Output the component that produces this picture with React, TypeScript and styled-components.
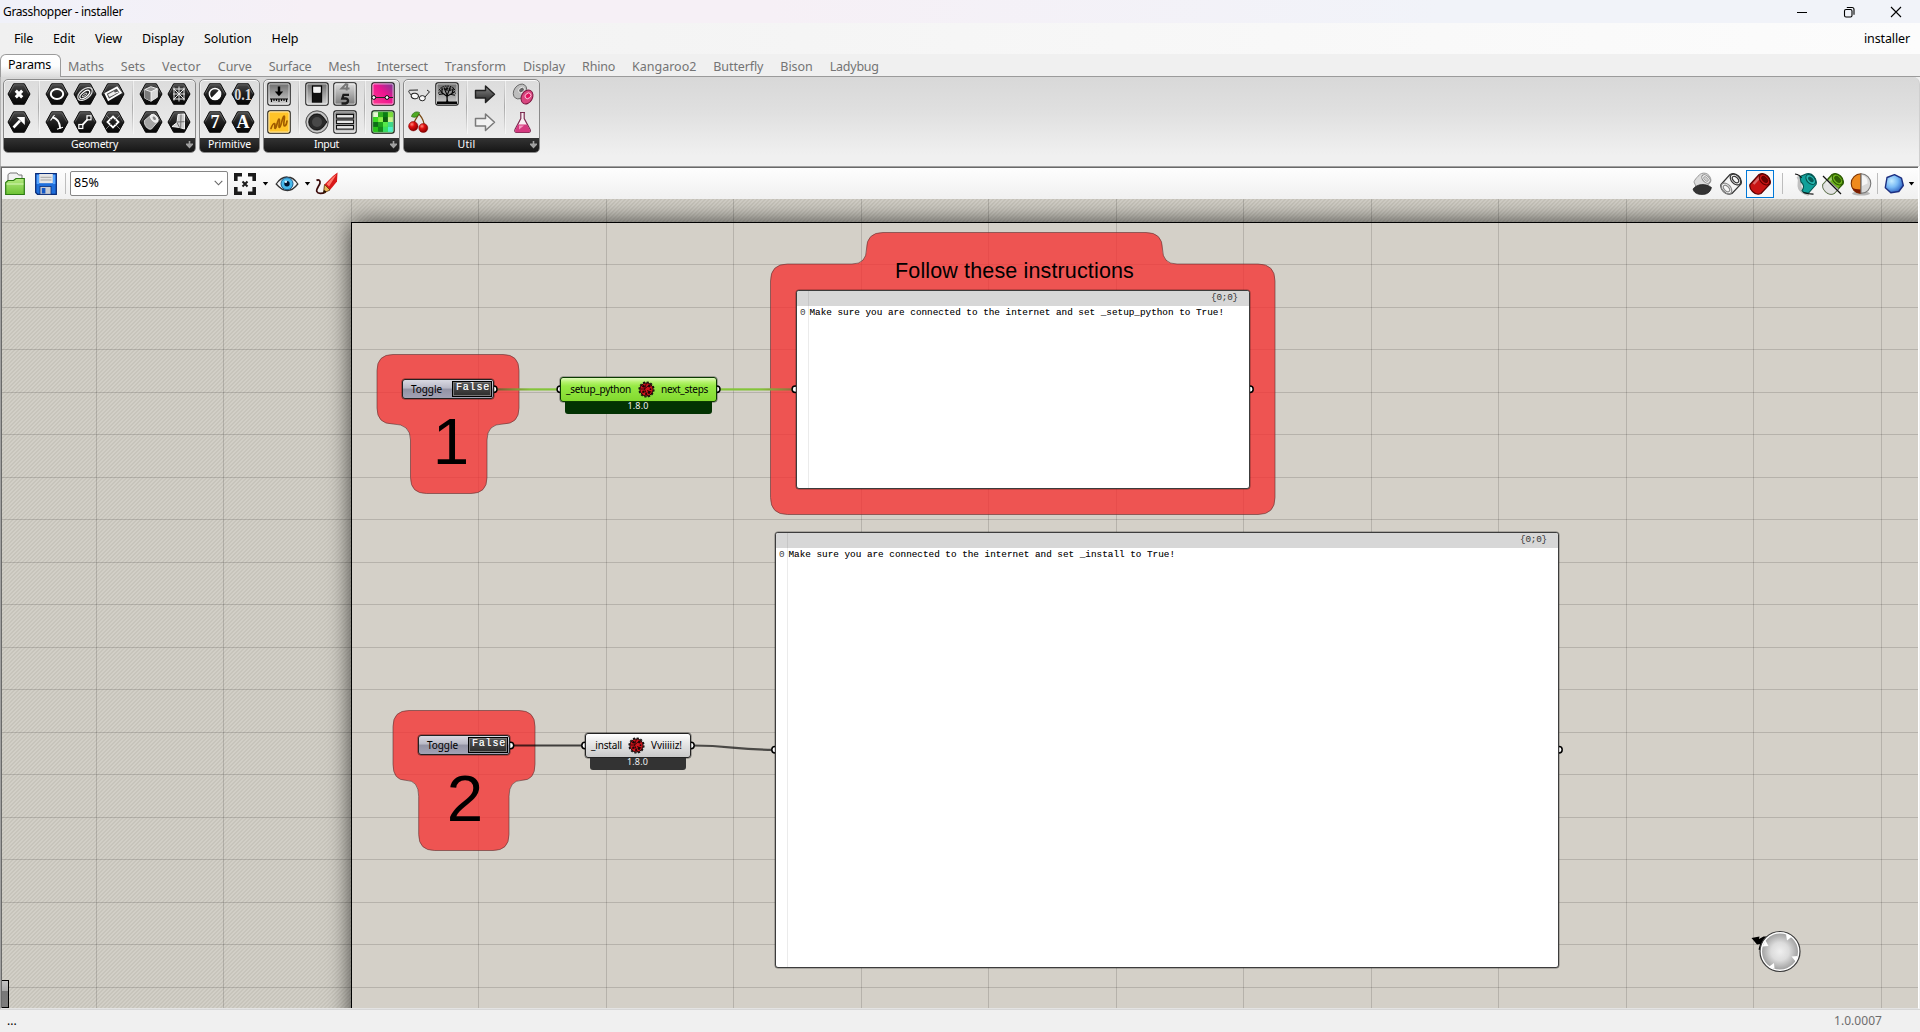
import React, { useLayoutEffect, useRef } from "react";
import styled, { createGlobalStyle } from "styled-components";

const ui = '"Noto Sans", "Open Sans", sans-serif';
const mono = '"Liberation Mono", monospace';

const Global = createGlobalStyle`
  * { box-sizing: border-box; }
  body { margin: 0; overflow: hidden; background: #f0f0f0; font-family: ${ui}; }
  svg { display: block; }
`;

/* ---------- text stretched to a known run width ---------- */

const Run = styled.span<{ $w: number }>`
  display: inline-block;
  width: ${(p) => p.$w}px;
  white-space: pre;
`;

function Fit({ w, children }: { w: number; children: string }) {
  const ref = useRef<HTMLSpanElement>(null);
  useLayoutEffect(() => {
    const el = ref.current;
    if (!el) return;
    el.style.letterSpacing = "0px";
    const natural = el.getBoundingClientRect().width;
    el.style.letterSpacing = `${(w - natural) / children.length}px`;
  }, [w, children]);
  return (
    <Run $w={w}>
      <span ref={ref}>{children}</span>
    </Run>
  );
}

/* ---------- window frame ---------- */

const Page = styled.div`
  width: 1920px;
  height: 1032px;
  display: flex;
  flex-direction: column;
  overflow: hidden;
  background: #f0f0f0;
  color: #000;
`;

const TitleBar = styled.header`
  height: 23px;
  flex: none;
  display: flex;
  align-items: center;
  padding: 0 18px 0 3px;
  background: linear-gradient(90deg, #f0f1f9 0%, #f6f0f6 16%, #f6f0f6 40%, #f1f3f9 75%);
  font-size: 12px;
  line-height: 23px;
`;

const WindowButtons = styled.div`
  margin-left: auto;
  display: flex;
  gap: 35px;
`;

const MenuBar = styled.nav`
  height: 31px;
  flex: none;
  display: flex;
  align-items: center;
  gap: 20px;
  padding: 0 10px 0 14px;
  background: linear-gradient(90deg, #f0f0f0 0%, #f6f6f6 50%, #fcfcfc 100%);
  font-size: 12.5px;
  line-height: 29px;
`;

const DocName = styled.span`
  margin-left: auto;
`;

const TabStrip = styled.div`
  height: 23px;
  flex: none;
  display: flex;
  align-items: flex-end;
  background: #f0f0f0;
`;

const ActiveTab = styled.div`
  width: 61px;
  height: 23px;
  flex: none;
  padding-left: 7px;
  border: 1px solid #9b9b9b;
  border-bottom: 0;
  border-radius: 6px 6px 0 0;
  background: linear-gradient(#ffffff 0%, #fdfdfd 50%, #dcdcdc 100%);
  font-size: 12.5px;
  line-height: 20px;
`;

const IdleTabs = styled.div`
  flex: 1;
  height: 23px;
  display: flex;
  gap: 17px;
  padding-left: 7px;
  border-bottom: 1px solid #9b9b9b;
  color: #747474;
  font-size: 12.5px;
  line-height: 25px;
`;

const Ribbon = styled.section`
  height: 89px;
  flex: none;
  display: flex;
  align-items: flex-start;
  gap: 3px;
  padding: 2px 0 0 2px;
  border-left: 1px solid #b4b4b4;
  border-right: 1px solid #cfcfcf;
  border-radius: 0 7px 0 0;
  background: linear-gradient(#d8d8d8 0%, #e0e0e0 40%, #f0f0f0 88%);
`;

const Group = styled.div`
  height: 74px;
  display: flex;
  flex-direction: column;
  border-radius: 5px;
  border: 1px solid #8a8a8a;
  box-shadow: inset 0 1px 0 #fafafa, inset 1px 0 0 #eee;
  background: linear-gradient(#dcdcdc, #f0f0f0);
  overflow: hidden;
`;

const GroupIcons = styled.div`
  flex: 1;
  display: flex;
  padding: 0 2px 0 1px;
`;

const IconColumn = styled.div`
  width: 28px;
  display: grid;
  grid-template-rows: 28px 28px;
  place-items: center;
`;

const GroupRule = styled.div`
  width: 10px;
  display: flex;
  justify-content: center;
  &::before {
    content: "";
    width: 1px;
    height: 54px;
    background: linear-gradient(rgba(150, 150, 150, 0), #aaa 50%, rgba(150, 150, 150, 0));
    box-shadow: 1px 0 0 rgba(255, 255, 255, 0.5);
  }
`;

const GroupLabel = styled.div<{ $more?: boolean }>`
  position: relative;
  height: 14px;
  display: flex;
  justify-content: center;
  padding-right: ${(p) => (p.$more ? 10 : 0)}px;
  background: linear-gradient(#333, #161616);
  color: #fff;
  font-size: 10.5px;
  line-height: 12px;
`;

const Expander = styled.svg`
  position: absolute;
  right: 2px;
  top: 3px;
`;

/* ---------- editor ---------- */

const Editor = styled.main`
  height: 843px;
  flex: none;
  margin-right: 1px;
  display: flex;
  flex-direction: column;
  border: 1px solid #a0a0a0;
  border-right-color: #fff;
  border-bottom-color: #e3e3e3;
`;

const EditorInner = styled.div`
  flex: 1;
  min-height: 0;
  display: flex;
  flex-direction: column;
  border-left: 1px solid #696969;
  border-top: 1px solid #696969;
`;

const Toolbar = styled.div`
  height: 31px;
  flex: none;
  display: flex;
  align-items: center;
  padding: 0 3px 0 3px;
  background: linear-gradient(#fefefe, #f0f0f0);
  & > svg { flex: none; }
`;

const Gap = styled.div<{ $w: number }>`
  width: ${(p) => p.$w}px;
  flex: none;
`;

const Push = styled.div`
  flex: 1;
`;

const ToolRule = styled.div`
  width: 1px;
  height: 21px;
  flex: none;
  background: #bdbdbd;
`;

const ZoomBox = styled.div`
  width: 158px;
  height: 25px;
  flex: none;
  display: flex;
  align-items: center;
  justify-content: space-between;
  padding: 0 4px 1px 3px;
  border: 1px solid #868686;
  border-radius: 2px;
  background: #fff;
  font-size: 12.5px;
  line-height: 20px;
`;

const Picked = styled.div`
  width: 28px;
  height: 28px;
  flex: none;
  display: grid;
  place-items: center;
  border: 1px solid #0078d7;
  background: #f7f9fb;
`;

const Canvas = styled.div`
  position: relative;
  flex: 1;
  overflow: hidden;
  background: #d4d0c8;
`;

const Plane = styled.div`
  position: absolute;
  left: -2px;
  top: -199px;
  width: 1920px;
  height: 1032px;
`;

const Layer = styled.svg`
  position: absolute;
  left: 0;
  top: 0;
`;

const Sheet = styled.div`
  position: absolute;
  left: 351px;
  top: 222px;
  width: 1700px;
  height: 900px;
  border: 1px solid #000;
  background: #d4d0c8;
  box-shadow: 0 0 22px rgba(0, 0, 0, 0.72);
`;

const Node = styled.div<{ $x: number; $y: number; $w: number; $h: number }>`
  position: absolute;
  left: ${(p) => p.$x}px;
  top: ${(p) => p.$y}px;
  width: ${(p) => p.$w}px;
  height: ${(p) => p.$h}px;
`;

const ToggleBox = styled(Node)`
  display: flex;
  align-items: center;
  justify-content: space-between;
  padding: 0 1px 0 8px;
  border: 1px solid #222;
  border-radius: 3px;
  background: linear-gradient(#d9d9e2 0%, #b8b8c6 45%, #9292a4 50%, #a2a2b4 100%);
  box-shadow: 0 0 0 0.5px rgba(0, 0, 0, 0.5);
  font-size: 10px;
  line-height: 17px;
`;

const ToggleValue = styled.div`
  width: 40px;
  height: 16px;
  padding-left: 3px;
  border: 1px solid #000;
  box-shadow: inset 0 0 0 1px #777;
  background: linear-gradient(#595959, #2c2c2c);
  color: #f0f0f0;
  font: 10px/12px ${mono};
  text-shadow: 0 0 0.6px #fff;
`;

const CapsuleTop = styled.div<{ $green?: boolean }>`
  height: 25px;
  display: flex;
  align-items: center;
  justify-content: space-between;
  padding: 0 8px 1px 5px;
  border: 1px solid ${(p) => (p.$green ? "#0a3a00" : "#222")};
  border-radius: 3px;
  background: ${(p) =>
    p.$green
      ? "linear-gradient(#dff8bd 0%, #b4f26c 18%, #97ea45 35%, #82d92f 100%)"
      : "linear-gradient(#ffffff 0%, #ececec 30%, #c9c9c9 100%)"};
  box-shadow: 0 0 0 0.5px rgba(0, 0, 0, 0.5);
  font-size: 10px;
  line-height: 18px;
  & > span { padding-bottom: 1px; }
`;

const CapsuleVersion = styled.div<{ $green?: boolean }>`
  height: 12px;
  margin: 0 5px;
  display: flex;
  justify-content: center;
  padding-right: 1px;
  border-radius: 0 0 3px 3px;
  background: ${(p) => (p.$green ? "#023202" : "#333")};
  color: #f0f0f0;
  font-size: 9px;
  line-height: 8px;
`;

const PanelBox = styled(Node)`
  display: flex;
  flex-direction: column;
  border: 1px solid #3c3c3c;
  border-radius: 3px;
  background: linear-gradient(#ebebeb, #ebebeb) 11px 0 / 1px 100% no-repeat #fff;
  box-shadow: 0 0 0 0.5px rgba(0, 0, 0, 0.4);
  font: 9.33px/12px ${mono};
  color: #111;
`;

const PanelHead = styled.div`
  height: 15px;
  flex: none;
  display: flex;
  justify-content: flex-end;
  padding-right: 11px;
  border-radius: 2px 2px 0 0;
  background: linear-gradient(#c6c6c6, #c6c6c6) 11px 0 / 1px 100% no-repeat #d7d7d7;
  color: #333;
  line-height: 13px;
`;

const PanelRow = styled.div`
  display: flex;
  padding: 1px 0 0 3px;
  gap: 4px;
  text-shadow: 0 0 0.4px rgba(0, 0, 0, 0.45);
`;

const RowIndex = styled.span`
  color: #444;
  text-shadow: none;
`;

const Caption = styled(Node)<{ $size: number }>`
  display: flex;
  justify-content: center;
  font-family: "Liberation Sans", Arial, sans-serif;
  font-size: ${(p) => p.$size}px;
  line-height: ${(p) => p.$h}px;
  white-space: nowrap;
`;

const StatusBar = styled.footer`
  flex: 1;
  display: flex;
  align-items: center;
  justify-content: space-between;
  padding: 0 38px 0 7px;
  border-top: 1px solid #d7d7d7;
  background: #f0f0f0;
  font-size: 12px;
  line-height: 18px;
`;

const Version = styled.span`
  color: #6d6d6d;
`;

/* ---------- icons ---------- */

const Defs = styled.svg`
  position: absolute;
  width: 0;
  height: 0;
`;

function SharedDefs() {
  return (
    <Defs>
      <defs>
        <linearGradient id="hex" x1="0" y1="0" x2="0" y2="1">
          <stop offset="0" stopColor="#4a4a4a" />
          <stop offset="0.45" stopColor="#222" />
          <stop offset="1" stopColor="#050505" />
        </linearGradient>
        <linearGradient id="steel" x1="0" y1="0" x2="0" y2="1">
          <stop offset="0" stopColor="#6a6a6a" />
          <stop offset="1" stopColor="#d4d4d4" />
        </linearGradient>
        <linearGradient id="steelUp" x1="0" y1="0" x2="0" y2="1">
          <stop offset="0" stopColor="#e0e0e0" />
          <stop offset="1" stopColor="#777" />
        </linearGradient>
        <linearGradient id="pink" x1="0" y1="1" x2="1" y2="0">
          <stop offset="0" stopColor="#ff3c90" />
          <stop offset="0.55" stopColor="#ee1490" />
          <stop offset="1" stopColor="#6f3b94" />
        </linearGradient>
        <radialGradient id="knob">
          <stop offset="0" stopColor="#efefef" />
          <stop offset="0.5" stopColor="#dcdcdc" />
          <stop offset="1" stopColor="#a2a2a2" />
        </radialGradient>
        <linearGradient id="folder" x1="0" y1="0" x2="0" y2="1">
          <stop offset="0" stopColor="#b4ea7e" />
          <stop offset="1" stopColor="#6cc233" />
        </linearGradient>
        <radialGradient id="gem" cx="0.35" cy="0.35" r="0.7">
          <stop offset="0" stopColor="#c5ecff" />
          <stop offset="0.5" stopColor="#79baf5" />
          <stop offset="1" stopColor="#2a5fc0" />
        </radialGradient>
        <radialGradient id="redBall" cx="0.35" cy="0.3" r="0.7">
          <stop offset="0" stopColor="#ff8a7a" />
          <stop offset="0.4" stopColor="#e01010" />
          <stop offset="1" stopColor="#8c0000" />
        </radialGradient>
        <linearGradient id="arrow" x1="0" y1="0" x2="0" y2="1">
          <stop offset="0" stopColor="#8a8a8a" />
          <stop offset="1" stopColor="#222" />
        </linearGradient>
      </defs>
    </Defs>
  );
}

const Hex = ({ children }: { children: React.ReactNode }) => (
  <svg width="24" height="24" viewBox="0 0 24 24">
    <polygon points="1,12.6 6.6,3 17.4,3 23,12.6 17.4,22.8 6.6,22.8" fill="#000" opacity="0.25" />
    <polygon points="1,12 6.6,1.8 17.4,1.8 23,12 17.4,22.2 6.6,22.2" fill="url(#hex)" stroke="#0a0a0a" strokeWidth="1" strokeLinejoin="round" />
    <polyline points="2.3,11.6 7.2,2.8 16.8,2.8 21.7,11.6" fill="none" stroke="#777" strokeWidth="0.6" />
    {children}
  </svg>
);

const Plate = ({ fill, children }: { fill: string; children: React.ReactNode }) => (
  <svg width="24" height="24" viewBox="0 0 24 24">
    <rect x="0.8" y="0.8" width="22.4" height="22.4" rx="2.2" fill={fill} stroke="#1c1c1c" strokeWidth="1.1" />
    <rect x="1.9" y="1.9" width="20.2" height="20.2" rx="1.2" fill="none" stroke="#fff" strokeOpacity="0.75" strokeWidth="0.9" />
    {children}
  </svg>
);

const w = { fill: "none", stroke: "#fff", strokeWidth: 1.6 } as const;

const geometry = [
  [
    <Hex key="a"><path d="M8.8 8.6l6.4 6.8M15.2 8.6l-6.4 6.8" {...w} strokeWidth="3" /></Hex>,
    <Hex key="b"><path d="M6.5 17.5l6.5-6.8" {...w} strokeWidth="2.6" /><path d="M9.8 7h8v8z" fill="#fff" /></Hex>,
  ],
  null,
  [
    <Hex key="a"><ellipse cx="12" cy="12" rx="6.2" ry="5" {...w} strokeWidth="2" /></Hex>,
    <Hex key="b"><path d="M7.500 7.200c4.500 1 7.200 5 7.700 11.300" {...w} strokeWidth="1.9" /><path d="M5.500 10.500l4-5.500M12 19.300l6-2" {...w} strokeWidth="1.200" /></Hex>,
  ],
  [
    <Hex key="a"><g transform="rotate(-38 12 12)"><ellipse cx="12" cy="12" rx="8.500" ry="4.800" {...w} strokeWidth="1.300" stroke="#ddd" /><ellipse cx="11.500" cy="12.300" rx="5.800" ry="2.700" {...w} strokeWidth="1.200" /><ellipse cx="11" cy="12.500" rx="2.800" ry="0.900" {...w} strokeWidth="0.800" /></g></Hex>,
    <Hex key="b"><path d="M8.500 15.800l7-7.500" {...w} strokeWidth="1.800" /><rect x="5.800" y="14.500" width="4" height="4" fill="#222" stroke="#fff" strokeWidth="1.200" /><rect x="14" y="5.800" width="4" height="4" fill="#222" stroke="#fff" strokeWidth="1.200" /></Hex>,
  ],
  [
    <Hex key="a"><path d="M4.500 11.500l11.500-6 3.800 5.300L7.500 18z" fill="#555" stroke="#fff" strokeWidth="1.900" /><path d="M9.500 13.500l5-2.500 3-1" stroke="#fff" strokeWidth="1.200" fill="none" /><path d="M7 12.500l6-3.200 1.500 2.500-6 3.200z" fill="#eee" /></Hex>,
    <Hex key="b"><path d="M12 6.500l5.500 5.500-5.500 5.500-5.500-5.500z" {...w} strokeWidth="1.800" /><path d="M5 5l5 5M19 5l-5 5M5 19l5-5M19 19l-5-5" {...w} stroke="#888" strokeWidth="0.900" /></Hex>,
  ],
  null,
  [
    <Hex key="a"><path d="M5.800 7.500l6-2.800 6.500 2v8.500l-6.300 4-6.200-3z" fill="#999" stroke="#fff" strokeWidth="0.900" /><path d="M5.800 7.500l6.200 2.300v9.400l-6.200-3z" fill="#7a7a7a" /><path d="M12 9.800l6.300-3.100v8.500l-6.300 4z" fill="#d8d8d8" /><path d="M5.800 7.500L12 9.800v9.400M12 9.800l6.300-3.100" {...w} strokeWidth="0.800" /></Hex>,
    <Hex key="b"><path d="M5.500 10.500l7-6c3-.500 7 3.500 6.500 7l-6.500 7.500c-3.500 1.500-8-4-7-8.500z" fill="#a5a5a5" stroke="#eee" strokeWidth="0.800" /><ellipse cx="15.300" cy="8.300" rx="4.600" ry="3" transform="rotate(48 15.300 8.300)" fill="#e8e8e8" stroke="#fff" strokeWidth="0.700" /><ellipse cx="15.300" cy="8.300" rx="2" ry="1.300" transform="rotate(48 15.300 8.300)" fill="#888" /></Hex>,
  ],
  [
    <Hex key="a"><path d="M6 7h12M6 12h12M6 17h12M7 5.500v13M12 4.500v15M17 5.500v13M7 7l10 10M17 7L7 17" {...w} strokeWidth="1" stroke="#e6e6e6" /></Hex>,
    <Hex key="b"><path d="M11 4.500l6.500-.500v15l-5-1.500-7.500-1 5-4z" fill="#cfcfcf" stroke="#fff" strokeWidth="0.900" /><path d="M10 12l7.500-.300M14 4.500l-.300 13.500M10 12.500l2.500 5" {...w} stroke="#666" strokeWidth="0.900" /></Hex>,
  ],
];

const glyph = { fill: "#fff", fontFamily: '"Liberation Serif", serif', fontWeight: 700, textAnchor: "middle" } as const;

const primitive = [
  [
    <Hex key="a"><circle cx="12" cy="12" r="5.600" {...w} strokeWidth="1.500" /><path d="M16.200 8A5.800 5.800 0 1 1 8 16.200z" fill="#fff" /></Hex>,
    <Hex key="b"><text x="12" y="18" fontSize="18" {...glyph}>7</text></Hex>,
  ],
  [
    <Hex key="a"><text x="12" y="17.700" fontSize="17" textLength="17.500" lengthAdjust="spacingAndGlyphs" {...glyph} fill="#d8d8d8">0.1</text></Hex>,
    <Hex key="b"><text x="12" y="18" fontSize="18" {...glyph}>A</text></Hex>,
  ],
];

const greens = [
  "#e8f7d4", "#2fae1e", "#0a7d12", "#7dde3a",
  "#39d820", "#8cf04a", "#0c5c10", "#c9f58c",
  "#0f6d18", "#1da31c", "#57e84a", "#3fd98a",
  "#27c417", "#15861c", "#37e060", "#4ff0c8",
];

const input = [
  [
    <Plate key="a" fill="url(#steel)"><path d="M12 4.500v6" stroke="#000" strokeWidth="2.400" /><path d="M7.800 9.500h8.400l-4.200 4.700z" /><path d="M3 17h18M4.500 17v3M7 17v2M9.500 17v2M12 17v3M14.500 17v2M17 17v2M19.500 17v3" stroke="#000" strokeWidth="1.100" /></Plate>,
    <Plate key="b" fill="#ffc428"><path d="M4 18.500c1-3 2.500-5 3.500-5s-.500 5 .800 5S10.500 9 12 9s-1 8.500.500 8.500S15.500 6 17 6s-1.500 10 .500 10 2-3 2.500-5" fill="none" stroke="#a15c00" strokeWidth="1.700" strokeLinecap="round" /></Plate>,
  ],
  null,
  [
    <Plate key="a" fill="url(#steel)"><rect x="7.500" y="4" width="9" height="16" fill="#e8e8e8" stroke="#000" strokeWidth="1.300" /><rect x="7.500" y="10.500" width="9" height="9.500" fill="#111" /><rect x="8.800" y="5.200" width="6.400" height="5.500" fill="#f4f4f4" /></Plate>,
    <svg key="b" width="24" height="24" viewBox="0 0 24 24"><circle cx="12" cy="12" r="11.200" fill="#a5a5a5" stroke="#555" strokeWidth="1" /><circle cx="12" cy="12" r="9.700" fill="none" stroke="#ddd" strokeWidth="0.800" /><path d="M22 12l-4 5a8 8 0 1 1 0-10z" fill="#2a2a2a" stroke="#000" strokeWidth="0.800" /><circle cx="12" cy="12" r="5" fill="#484848" /></svg>,
  ],
  [
    <Plate key="a" fill="url(#steelUp)"><path d="M13.500 1.500L8.500 6.500h8M14.500 1.500l-1 7" stroke="#777" strokeWidth="1.900" fill="none" /><path d="M16 12.800h-5.500l-1.200 3.700h3.500c3.500.500 2.500 4.500-.300 5H8.500" stroke="#1b1b1b" strokeWidth="2.300" fill="none" /></Plate>,
    <Plate key="b" fill="url(#steel)"><g fill="#e8e8e8" stroke="#111" strokeWidth="1.100"><rect x="3.500" y="4.500" width="17" height="3.600" /><rect x="3.500" y="10" width="17" height="3.600" /><rect x="3.500" y="15.500" width="17" height="3.600" /></g></Plate>,
  ],
  null,
  [
    <Plate key="a" fill="url(#pink)"><path d="M2 15.500h20" stroke="#222" strokeWidth="1.200" /><circle cx="2.800" cy="15.500" r="1.900" fill="#fff" stroke="#000" /><circle cx="16" cy="15.500" r="1.900" fill="#fff" stroke="#000" /></Plate>,
    <Plate key="b" fill="#1c8c1c">{greens.map((c, i) => <rect key={i} x={2.2 + (i % 4) * 4.9} y={2.2 + Math.floor(i / 4) * 4.9} width="4.950" height="4.950" fill={c} />)}</Plate>,
  ],
];

const util = [
  [
    <svg key="a" width="24" height="24" viewBox="0 0 24 24" fill="none" stroke="#222" strokeWidth="1"><ellipse cx="7.800" cy="14" rx="3.600" ry="2.700" fill="#f8f8f8" transform="rotate(12 7.800 14)" /><ellipse cx="15.300" cy="16.200" rx="3" ry="2.600" fill="#f8f8f8" /><path d="M11.300 14.500l1.200.800M4.200 13C1.500 10 1 8.500 3 8.200L11 8M18 15L22.500 9.800l-2.500-1.800" /></svg>,
    <svg key="b" width="24" height="24" viewBox="0 0 24 24"><path d="M12 4C10 8 6.500 11 6.800 15M12 4c3 3.500 5.500 8 5.200 13" fill="none" stroke="#7a4a14" strokeWidth="1.200" /><path d="M12.500 2.500C11 7.500 7.500 8 4.500 6.500c1-4 4.500-5.500 8-4z" fill="#4faa23" stroke="#24660c" strokeWidth="0.700" /><circle cx="6.300" cy="16.200" r="4.700" fill="url(#redBall)" stroke="#7a0000" strokeWidth="0.500" /><circle cx="16.300" cy="18" r="4.500" fill="url(#redBall)" stroke="#7a0000" strokeWidth="0.500" /></svg>,
  ],
  [
    <Plate key="a" fill="url(#steel)"><rect x="2" y="19.500" width="20" height="2.800" fill="#050505" /><path d="M11 20c.800-2.500.500-5-.200-7h2.400c-.700 2-.700 4.500.300 7z" fill="#050505" /><path d="M11.500 14L5.500 9.500M12 13l-3-7.500M12.300 13l3-8M12.500 14l7-4M8.500 11.800L4 12.500M15.500 12.200l4.500 1M7 10.500V5.500M17 11.300l1.500-5.500M12 9V4.500M10 8l2-1.500M14 8.500l2.500-.500" fill="none" stroke="#050505" strokeWidth="1.100" /><g fill="none" stroke="#0c0c0c" strokeWidth="1" strokeDasharray="1.600 0.900"><path d="M4 8.500c1-3 4-4.500 8-4.500s7 1.500 8 4.500" /><path d="M3.500 11.500c1-3 4-5 8.500-5s7.500 2 8.500 5" /></g></Plate>,
    <span key="b" />,
  ],
  null,
  [
    <svg key="a" width="24" height="24" viewBox="0 0 24 24"><path d="M2.500 8.500h10V4l9 8.300-9 8.200V16h-10z" fill="url(#arrow)" stroke="#222" strokeWidth="1.400" strokeLinejoin="round" /></svg>,
    <svg key="b" width="24" height="24" viewBox="0 0 24 24"><path d="M2.500 8.500h10V4l9 8.300-9 8.200V16h-10z" fill="#f2f2f2" stroke="#7a7a7a" strokeWidth="1.500" strokeLinejoin="round" /></svg>,
  ],
  null,
  [
    <svg key="a" width="24" height="24" viewBox="0 0 24 24"><ellipse cx="9" cy="9.500" rx="6" ry="8" transform="rotate(35 9 9.500)" fill="#bdbdbd" stroke="#666" strokeWidth="0.900" /><ellipse cx="10.500" cy="8" rx="3.200" ry="2.400" transform="rotate(-40 10.500 8)" fill="#666" stroke="#f4f4f4" strokeWidth="0.900" /><ellipse cx="16" cy="15" rx="5.500" ry="7.300" transform="rotate(30 16 15)" fill="#d8467f" stroke="#7b1640" strokeWidth="1" /><ellipse cx="17" cy="13.800" rx="3.200" ry="2.500" transform="rotate(-40 17 13.800)" fill="#e2125f" stroke="#ffd0e2" strokeWidth="0.900" /></svg>,
    <svg key="b" width="24" height="24" viewBox="0 0 24 24"><path d="M9 2.500h5M9.800 2.500v6L4 19.500c-.800 2 .200 3 1.800 3h11.500c1.700 0 2.600-1.200 1.800-3L13.200 8.500v-6" fill="#f9eef3" stroke="#7b2b50" strokeWidth="1.200" /><path d="M7 14.500h9l3 5.500c.400 1.500-.300 2.200-1.800 2.200H5.800c-1.600 0-2-.700-1.500-2.200z" fill="#d5397f" /><path d="M8 15.500h5l-5 4z" fill="#f39abf" /></svg>,
  ],
];

type Columns = (React.ReactNode[] | null)[];

function RibbonGroup({ label, run, more, columns }: { label: string; run: number; more?: boolean; columns: Columns }) {
  return (
    <Group>
      <GroupIcons>
        {columns.map((c, i) => (c ? <IconColumn key={i}>{c}</IconColumn> : <GroupRule key={i} />))}
      </GroupIcons>
      <GroupLabel $more={more}>
        <Fit w={run}>{label}</Fit>
        {more && (
          <Expander width="7" height="8" viewBox="0 0 7 8">
            <path d="M2.700 0h1.600v2.500H7v1.300L3.500 7.500 0 3.800V2.500h2.700z" fill="#a0a0a0" />
          </Expander>
        )}
      </GroupLabel>
    </Group>
  );
}

const Caret = () => (
  <svg width="7" height="4" viewBox="0 0 7 4"><path d="M.8 0h5.400L3.500 3.500z" /></svg>
);

/* pipe segment seen from an angle, shared by the preview buttons */
const Pipe = ({ body, edge, hole, half }: { body: string; edge: string; hole: string; half?: string }) => (
  <svg width="24" height="24" viewBox="0 0 24 24">
    <path d="M2 12.500L11 2.500c3-1.500 6-.800 8.500 1.500s3.500 5 2.500 8l-9 9.500c-3 1.500-6 .500-8.500-2S1.300 15 2 12.500z" fill={body} stroke={edge} strokeWidth="1.200" />
    {half && <path d="M2 12.500L6.500 7.500 17.500 17 13 21.500c-3 1.500-6 .500-8.500-2S1.300 15 2 12.500z" fill={half} stroke="#777" strokeWidth="0.700" />}
    <path d="M5.500 12L12 5" stroke="#fff" strokeOpacity="0.350" strokeWidth="2.500" fill="none" />
    <ellipse cx="16.500" cy="7.500" rx="6.300" ry="4.200" transform="rotate(47 16.500 7.500)" fill={body} stroke={edge} strokeWidth="1.100" />
    <ellipse cx="16.700" cy="7.400" rx="3.800" ry="2.200" transform="rotate(47 16.700 7.400)" fill={hole} stroke={edge} strokeWidth="0.800" />
    {half && <path d="M2 4l18 18" stroke="#111" strokeWidth="1.200" />}
  </svg>
);

function ToolIcons() {
  return (
    <Toolbar>
      <svg width="20" height="24" viewBox="0 0 20 24">
        <path d="M3 9V2.500l2-1.500h7l1.500 2H17V12H3z" fill="#f1f1f1" stroke="#777" />
        <path d="M.700 22.500V10.500L3 8.500h5.500l2.500-2h8.300v16z" fill="url(#folder)" stroke="#2c7a12" strokeWidth="1.200" />
        <path d="M1.500 12h17" stroke="#d7f7b8" />
      </svg>
      <Gap $w={10} />
      <svg width="22" height="24" viewBox="0 0 22 24">
        <path d="M.700 1.700h20.600v20.600H2.500L.700 20.500z" fill="#1f6fdc" stroke="#0b2d78" strokeWidth="1.300" />
        <path d="M1.700 12V2.700H4V12zM18 2.700h2.300V12H18z" fill="#55a4ff" />
        <rect x="4.200" y="2" width="13.600" height="9.200" fill="#e6e6e6" />
        <path d="M5.500 5.300h11M5.500 8h11" stroke="#a5a5a5" />
        <rect x="5" y="14.500" width="11" height="7.800" fill="#c9ccd2" stroke="#0b2d78" strokeWidth="0.800" />
        <rect x="6.800" y="16" width="3.600" height="5.500" fill="#1458c8" />
      </svg>
      <Gap $w={8} />
      <ToolRule />
      <Gap $w={4} />
      <ZoomBox>
        <Fit w={25}>85%</Fit>
        <svg width="9" height="6" viewBox="0 0 9 6"><path d="M.700.800l3.800 4 3.800-4" fill="none" stroke="#666" strokeWidth="1.100" /></svg>
      </ZoomBox>
      <Gap $w={5} />
      <svg width="24" height="24" viewBox="0 0 24 24" fill="none" stroke="#1b1b1b" strokeWidth="3.600">
        <path d="M2.800 9V2.800H9M15 2.800h6.200V9M21.200 15v6.200H15M9 21.200H2.800V15" />
        <path d="M9.500 9.500l5 5M14.500 9.500l-5 5" strokeWidth="2" />
      </svg>
      <Gap $w={5} />
      <Caret />
      <Gap $w={6} />
      <svg width="24" height="24" viewBox="0 0 24 24">
        <path d="M1.200 12C5 6.500 9 4.800 12.500 5c4 0 7.500 2.500 10.300 7-3.500 4.500-7 6.500-10.300 6.500C8.500 18.500 5 16.500 1.200 12z" fill="#f3f6f8" stroke="#333" strokeWidth="1.300" />
        <circle cx="12" cy="11.700" r="6" fill="#46b9ec" stroke="#1c5c8c" strokeWidth="1" />
        <circle cx="12" cy="11.700" r="2.700" fill="#04122e" />
        <circle cx="10.800" cy="9.800" r="1.300" fill="#d5f3ff" />
      </svg>
      <Gap $w={5} />
      <Caret />
      <Gap $w={4} />
      <svg width="24" height="24" viewBox="0 0 24 24">
        <path d="M1.500 8.500c2-1.500 4 0 3.500 2.500S.800 17 1.800 19.500s5 2.500 9 .500" fill="none" stroke="#3a0a0a" strokeWidth="1.700" />
        <path d="M9.500 12.500L18 4l4.500-3.500L22 9.500 15 18z" fill="#d81818" />
        <path d="M11.500 12L18 5l3.500-2.500-7.500 12z" fill="#ff7468" />
        <path d="M9.500 12.500l5.500 5.500-6.500 3z" fill="#e9b95a" stroke="#5a2a00" strokeWidth="0.800" />
        <path d="M9 18l2.500 1.500-3.500 1.800z" fill="#1b0b00" />
      </svg>

      <Push />

      <svg width="24" height="24" viewBox="0 0 24 24">
        <path d="M4 10c0-1.500 5-7.500 7.500-8.500 3-1 6 0 7.500 2s2.500 4.500 1.500 6.500l-4 4.500H6z" fill="#dcdcdc" stroke="#999" />
        <ellipse cx="16" cy="7" rx="5" ry="3.200" transform="rotate(45 16 7)" fill="#efefef" stroke="#888" />
        <ellipse cx="16" cy="7" rx="3" ry="1.600" transform="rotate(45 16 7)" fill="#ccc" stroke="#999" strokeWidth="0.700" />
        <path d="M3 17c4-5.500 13-6 18.500-1.500-1.500 5.500-5 7-9.500 7s-8-1.500-9-5.500z" fill="#333" stroke="#111" strokeWidth="0.600" />
      </svg>
      <Gap $w={5} />
      <svg width="24" height="24" viewBox="0 0 24 24" fill="none" stroke="#333" strokeWidth="1.200">
        <path d="M2 12.500L11 2.500c3-1.500 6-.800 8.500 1.500s3.500 5 2.500 8l-9 9.500c-3 1.500-6 .500-8.500-2S1.300 15 2 12.500z" fill="#f6f6f6" />
        <ellipse cx="16.500" cy="7.500" rx="6.300" ry="4.200" transform="rotate(47 16.500 7.500)" />
        <ellipse cx="16.500" cy="7.500" rx="3.900" ry="2.300" transform="rotate(47 16.500 7.500)" />
        <ellipse cx="7.500" cy="16.500" rx="6.300" ry="4.200" transform="rotate(47 7.500 16.500)" stroke="#888" />
        <ellipse cx="7.500" cy="16.500" rx="3.900" ry="2.300" transform="rotate(47 7.500 16.500)" stroke="#888" />
      </svg>
      <Gap $w={3} />
      <Picked><Pipe body="#c81414" edge="#5c0000" hole="#6a0000" /></Picked>
      <Gap $w={8} />
      <ToolRule />
      <Gap $w={11} />
      <svg width="24" height="24" viewBox="0 0 24 24">
        <path d="M4 4c4 4 0 8 2 12s6 5 9 6" fill="none" stroke="#000" strokeOpacity="0.220" strokeWidth="4" />
        <path d="M6 4.500L12 2c3.500-1 6 0 8 2.500s3 5 2 8L14.500 21c-3 .500-5.500-.500-6.500-2.500 3-3.500 1-7-1-8.500z" fill="#10a09a" stroke="#045450" strokeWidth="1.100" />
        <ellipse cx="16.700" cy="7.500" rx="5.800" ry="3.800" transform="rotate(47 16.700 7.500)" fill="#27b7b0" stroke="#045450" />
        <ellipse cx="16.900" cy="7.400" rx="3.400" ry="2" transform="rotate(47 16.900 7.400)" fill="#055b57" />
        <path d="M1 2c3.500.500 5.500 2 6.500 4M9.500 20.500c3 1 7 1.700 10 1.700" fill="none" stroke="#111" strokeWidth="1.200" />
      </svg>
      <Gap $w={3} />
      <Pipe body="#6fb51c" edge="#2b5a02" hole="#315f06" half="#e3e3e3" />
      <Gap $w={4} />
      <svg width="24" height="24" viewBox="0 0 24 24">
        <ellipse cx="12" cy="21.500" rx="9" ry="2" fill="#000" opacity="0.250" />
        <path d="M12 1.800a9.800 9.800 0 0 0 0 19.600z" fill="#ef8a1d" stroke="#7c3300" strokeWidth="1.100" />
        <path d="M3 15.500a9.800 9.800 0 0 0 9 5.900v-4c-4 0-7-.500-9-1.900z" fill="#7d1c00" />
        <path d="M12 1.800a9.800 9.800 0 0 1 0 19.600z" fill="#d9d9d9" stroke="#777" strokeWidth="1.100" />
        <path d="M13 3c4 1.500 6 4.500 5.500 8.500L13 14z" fill="#f5f5f5" />
      </svg>
      <Gap $w={4} />
      <ToolRule />
      <Gap $w={5} />
      <svg width="22" height="24" viewBox="0 0 22 24">
        <path d="M4 5.500l7.500-2.800 7 3.500 1.800 7.300-4.500 6-8 1.200-5.500-5z" fill="url(#gem)" stroke="#1d2f80" strokeWidth="1.400" strokeLinejoin="round" />
      </svg>
      <Gap $w={3} />
      <Caret />
    </Toolbar>
  );
}

/* ---------- canvas drawings ---------- */

const STEP = 127.5;
const verticals = Array.from({ length: 15 }, (_, k) => Math.floor(96.3 + STEP * k));
const horizontals = Array.from({ length: 19 }, (_, k) => Math.floor(222.3 + (STEP / 3) * k));

function Backdrop() {
  return (
    <Layer width="1920" height="1032" shapeRendering="crispEdges">
      <defs>
        <pattern id="hatch" width="4" height="4" patternUnits="userSpaceOnUse">
          <rect width="4" height="4" fill="#d2cfc7" />
          <path d="M0 3h2v1H0zM1 2h2v1H1zM2 1h2v1H2zM3 0h1v1H3zM0 0h1v1H0z" fill="#c7c4bb" />
        </pattern>
      </defs>
      <rect width="1920" height="1032" fill="url(#hatch)" />
    </Layer>
  );
}

function GridLines() {
  return (
    <Layer width="1920" height="1032" shapeRendering="crispEdges" fill="#000" fillOpacity="0.140">
      {verticals.map((x) => <rect key={x} x={x} y="199" width="1" height="809" />)}
      {horizontals.map((y) => <rect key={y} x="2" y={y} width="1916" height="1" />)}
    </Layer>
  );
}

const tee = (l: number, r: number, t: number, m: number, sl: number, sr: number, b: number) => {
  const q = 16;
  const a = Math.min(16, (sl - l) / 2);
  const c = Math.min(16, (r - sr) / 2);
  return `M${l + q} ${t}H${r - q}Q${r} ${t} ${r} ${t + q}V${m - q}Q${r} ${m} ${r - c} ${m}Q${sr} ${m} ${sr} ${m + q}V${b - q}Q${sr} ${b} ${sr - q} ${b}H${sl + q}Q${sl} ${b} ${sl} ${b - q}V${m + q}Q${sl} ${m} ${l + a} ${m}Q${l} ${m} ${l} ${m - q}V${t + q}Q${l} ${t} ${l + q} ${t}Z`;
};

const Grip = ({ x, y }: { x: number; y: number }) => (
  <circle cx={x} cy={y} r="3.200" fill="#fff" stroke="#000" strokeWidth="1.500" />
);

function Links() {
  return (
    <Layer width="1920" height="1032">
      <defs>
        <linearGradient id="wireA" gradientUnits="userSpaceOnUse" x1="497" y1="0" x2="530" y2="0">
          <stop offset="0" stopColor="#7d5a34" />
          <stop offset="1" stopColor="#84c43a" />
        </linearGradient>
        <linearGradient id="wireB" gradientUnits="userSpaceOnUse" x1="760" y1="0" x2="795" y2="0">
          <stop offset="0" stopColor="#84c43a" />
          <stop offset="1" stopColor="#8f6a3e" />
        </linearGradient>
      </defs>
      <g fill="rgba(245,49,49,0.78)" stroke="rgba(90,50,50,0.6)" strokeWidth="1">
        <path d={tee(377, 519, 354.5, 424, 410.5, 487, 493.5)} />
        <path d={tee(393, 535, 710.5, 780.3, 418.7, 509, 850.5)} />
        <path d="M883 232.500H1146Q1162.500 232.500 1162.500 249Q1162.500 264 1177 264H1258Q1275 264 1275 281V497.500Q1275 514.500 1258 514.500H787.500Q770.500 514.500 770.500 497.500V281Q770.500 264 787.500 264H852Q866.500 264 866.500 249Q866.500 232.500 883 232.500Z" />
      </g>
      <g fill="none" strokeWidth="2.200">
        <rect x="497" y="388.300" width="61" height="2.200" fill="url(#wireA)" />
        <rect x="720" y="388.300" width="74" height="2.200" fill="url(#wireB)" />
        <path d="M514 745.500H583" stroke="#000" strokeOpacity="0.700" />
        <path d="M693 745.500C733 745.500 732 749.800 774 749.800" stroke="#000" strokeOpacity="0.650" />
      </g>
      <Grip x={493.8} y={389.3} />
      <Grip x={560.3} y={389.3} />
      <Grip x={716.8} y={389.3} />
      <Grip x={795.3} y={389.3} />
      <Grip x={1250} y={389.3} />
      <Grip x={510.5} y={745.5} />
      <Grip x={585} y={745.5} />
      <Grip x={691} y={745.5} />
      <Grip x={775} y={749.8} />
      <Grip x={1559} y={749.8} />
    </Layer>
  );
}

const Bug = () => (
  <svg width="17" height="17" viewBox="0 0 17 17">
    <circle cx="8.500" cy="8.500" r="7.400" fill="none" stroke="#111" strokeWidth="1.400" strokeDasharray="2.200 1.670" />
    <circle cx="8.500" cy="8.500" r="6.600" fill="#d2141c" stroke="#1c0606" strokeWidth="1" />
    <path d="M8.500 2L6.500 8l3 7M2.500 8l4 0 3.500-3M9 9.500l4.500 1.500M4 12l3.500-1.500" stroke="#2a0505" fill="none" strokeWidth="0.900" />
    <g fill="#1c0606"><circle cx="5.500" cy="5.300" r="1.300" /><circle cx="11.300" cy="5" r="1.400" /><circle cx="5.300" cy="10.500" r="1.100" /><circle cx="11" cy="11.500" r="1.400" /><circle cx="12.500" cy="8.200" r="0.900" /><circle cx="8" cy="13" r="1" /></g>
  </svg>
);

function Toggle({ x, y }: { x: number; y: number }) {
  return (
    <ToggleBox $x={x} $y={y} $w={92} $h={20}>
      <Fit w={31}>Toggle</Fit>
      <ToggleValue><Fit w={34}>False</Fit></ToggleValue>
    </ToggleBox>
  );
}

interface CapsuleProps {
  x: number; y: number; width: number; green?: boolean;
  input: string; inputRun: number; output: string; outputRun: number;
}

function Capsule(p: CapsuleProps) {
  return (
    <Node $x={p.x} $y={p.y} $w={p.width} $h={37}>
      <CapsuleTop $green={p.green}>
        <Fit w={p.inputRun}>{p.input}</Fit>
        <Bug />
        <Fit w={p.outputRun}>{p.output}</Fit>
      </CapsuleTop>
      <CapsuleVersion $green={p.green}><Fit w={21}>1.8.0</Fit></CapsuleVersion>
    </Node>
  );
}

interface PanelProps { x: number; y: number; width: number; height: number; text: string; run: number }

function Panel(p: PanelProps) {
  return (
    <PanelBox $x={p.x} $y={p.y} $w={p.width} $h={p.height}>
      <PanelHead><Fit w={27}>{"{0;0}"}</Fit></PanelHead>
      <PanelRow>
        <RowIndex><Fit w={5.5}>0</Fit></RowIndex>
        <Fit w={p.run}>{p.text}</Fit>
      </PanelRow>
    </PanelBox>
  );
}

function Compass() {
  return (
    <Layer width="1920" height="1032">
      <path d="M1751.500 938l8-1.500-.500 2.500 4.500-2.500h4l-2 4.500-4.500 9.500-2.500-1 1.500-5.500-3 .500z" fill="#000" />
      <circle cx="1780" cy="951.500" r="20" fill="#fff" stroke="#3a3a3a" strokeWidth="1.200" />
      <circle cx="1780" cy="951.500" r="18" fill="url(#knob)" />
      <g fill="#fff">
        <path d="M1786 934l6 2.500-5 4z" />
        <path d="M1797.500 956l-6 .500 4.500 5.500z" />
        <path d="M1774.500 968.500l-.500-5.500-5.500 4z" />
        <path d="M1762.500 946.500l6-.500-3-5.500z" />
      </g>
    </Layer>
  );
}

const Drawer = styled.div`
  position: absolute;
  left: 1px;
  top: 980px;
  width: 8px;
  height: 28px;
  border: 1px solid #000;
  background: linear-gradient(#c4c4c4 0%, #a9a9a9 38%, #777 40%, #7d7d7d 100%);
`;

const menus: [string, number][] = [["File", 19], ["Edit", 22], ["View", 27], ["Display", 42], ["Solution", 47.5], ["Help", 27]];
const tabs: [string, number][] = [
  ["Maths", 35.8], ["Sets", 24.3], ["Vector", 38.7], ["Curve", 34], ["Surface", 42.5], ["Mesh", 31.8],
  ["Intersect", 50.7], ["Transform", 61.3], ["Display", 42], ["Rhino", 33], ["Kangaroo2", 64.3],
  ["Butterfly", 50], ["Bison", 32.4], ["Ladybug", 49],
];

export default function App() {
  return (
    <Page>
      <Global />
      <SharedDefs />
      <TitleBar>
        <Fit w={120}>Grasshopper - installer</Fit>
        <WindowButtons>
          <svg width="12" height="12" viewBox="0 0 12 12"><path d="M1 6.500h10" stroke="#000" /></svg>
          <svg width="12" height="12" viewBox="0 0 12 12" fill="none" stroke="#000" strokeWidth="1.100"><rect x="1.500" y="3.500" width="7.500" height="7.500" rx="1.500" /><path d="M3.800 1.500h5.200a2 2 0 0 1 2 2v5.200" /></svg>
          <svg width="12" height="12" viewBox="0 0 12 12"><path d="M1 1l10 10M11 1L1 11" stroke="#000" strokeWidth="1.100" /></svg>
        </WindowButtons>
      </TitleBar>
      <MenuBar>
        {menus.map(([t, n]) => <Fit key={t} w={n}>{t}</Fit>)}
        <DocName><Fit w={46}>installer</Fit></DocName>
      </MenuBar>
      <TabStrip>
        <ActiveTab><Fit w={43}>Params</Fit></ActiveTab>
        <IdleTabs>{tabs.map(([t, n]) => <Fit key={t} w={n}>{t}</Fit>)}</IdleTabs>
      </TabStrip>
      <Ribbon>
        <RibbonGroup label="Geometry" run={47} more columns={geometry} />
        <RibbonGroup label="Primitive" run={43} columns={primitive} />
        <RibbonGroup label="Input" run={25} more columns={input} />
        <RibbonGroup label="Util" run={18} more columns={util} />
      </Ribbon>
      <Editor>
        <EditorInner>
          <ToolIcons />
          <Canvas>
            <Plane>
              <Backdrop />
              <Sheet />
              <GridLines />
              <Links />
              <Caption $x={841} $y={257} $w={347} $h={28} $size={21.5}><Fit w={239}>Follow these instructions</Fit></Caption>
              <Caption $x={420} $y={408} $w={62} $h={68} $size={65.5}>1</Caption>
              <Caption $x={434} $y={765} $w={62} $h={68} $size={65.5}>2</Caption>
              <Toggle x={402} y={379} />
              <Capsule x={560} y={377} width={157} green input="_setup_python" inputRun={65} output="next_steps" outputRun={47} />
              <Panel x={796} y={290} width={454} height={199} run={414.5} text="Make sure you are connected to the internet and set _setup_python to True!" />
              <Toggle x={418} y={735} />
              <Capsule x={585} y={733} width={106} input="_install" inputRun={31} output="Vviiiiiz!" outputRun={31} />
              <Panel x={775} y={532} width={784} height={436} run={386.5} text="Make sure you are connected to the internet and set _install to True!" />
              <Drawer />
              <Compass />
            </Plane>
          </Canvas>
        </EditorInner>
      </Editor>
      <StatusBar>
        <span>...</span>
        <Version><Fit w={48}>1.0.0007</Fit></Version>
      </StatusBar>
    </Page>
  );
}
